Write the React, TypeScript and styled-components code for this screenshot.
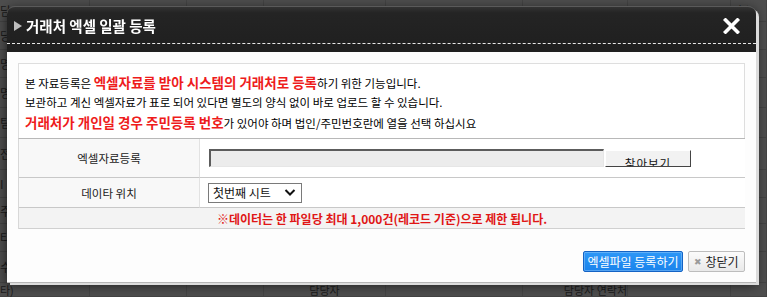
import React from "react";
import styled, { createGlobalStyle } from "styled-components";

const GlobalStyle = createGlobalStyle`
  html, body { margin: 0; padding: 0; }
  body {
    background: #4e4e4e;
    font-family: "Noto Sans CJK KR", "Noto Sans", sans-serif;
    overflow: hidden;
  }
`;

/* ---------- dimmed page behind the dialog ---------- */
const BgPage = styled.div`
  width: 767px;
  height: 297px;
  display: flex;
  flex-direction: column;
  overflow: hidden;
  color: #1c1c1c;
  font-size: 12px;
`;

const BgRow = styled.div<{ $h: number }>`
  height: ${(p) => p.$h}px;
  flex: none;
  display: grid;
  grid-template-columns: 90px 97px 77px 122px 137px 105px 103px 36px;
  border-bottom: 1px solid #434343;
  box-sizing: border-box;
`;

const BgCell = styled.div<{ $align?: string; $top?: boolean }>`
  border-right: 1px solid #444;
  display: flex;
  align-items: ${(p) => (p.$top ? "flex-start" : "center")};
  padding-top: ${(p) => (p.$top ? "1px" : "0")};
  font-size: ${(p) => (p.$top ? "11px" : "12px")};
  line-height: 12px;
  justify-content: ${(p) => p.$align || "flex-start"};
  white-space: nowrap;
  overflow: ${(p) => (p.$top ? "visible" : "hidden")};
`;

/* ---------- dialog ---------- */
const Overlay = styled.div`
  position: fixed;
  inset: 0;
`;

const Dialog = styled.div`
  position: absolute;
  left: 7px;
  top: 6px;
  width: 749px;
  display: flex;
  flex-direction: column;
  box-shadow: 0 1px 0 #b5b5b5, 3px 3px 0 #dcdcdc, 0 3px 12px rgba(0, 0, 0, 0.65);
  border-radius: 8px 8px 0 0;
`;

const Header = styled.div`
  background: linear-gradient(#333333 0px, #242424 6px, #1f1f1f 100%);
  border-radius: 8px 8px 0 0;
  padding-bottom: 8px;
  border-top: 1px solid #5a5a5a;
`;

const TitleRow = styled.div`
  height: 36px;
  display: flex;
  align-items: center;
  justify-content: space-between;
  padding: 0 16px 0 7px;
  border-bottom: 1px dashed #e8e8e8;
`;

const Title = styled.h1`
  margin: 0;
  display: flex;
  align-items: center;
  gap: 4px;
  color: #ffffff;
  font-size: 14.5px;
  font-weight: bold;
  letter-spacing: 0;
`;

const Arrow = styled.span`
  width: 0;
  height: 0;
  border-left: 8px solid #bdbdbd;
  border-top: 5px solid transparent;
  border-bottom: 5px solid transparent;
  margin-top: 1px;
`;

const CloseX = styled.button`
  border: 0;
  background: none;
  padding: 0;
  width: 17px;
  height: 16px;
  display: flex;
  margin-top: 1px;
  cursor: pointer;
`;

const Body = styled.div`
  background: #fdfdfd;
  padding: 11px 11px 10px;
  display: flex;
  flex-direction: column;
`;

const InfoBox = styled.div`
  border: 1px solid #dedede;
  border-bottom: 0;
  background: #ffffff;
  padding: 8px 6px 6px;
  font-size: 11.5px;
  color: #000;
  line-height: 20px;
`;

const InfoLine = styled.p`
  margin: 0;
  height: 20px;
  display: flex;
  align-items: baseline;
  white-space: pre;
`;

const Red = styled.span`
  color: #ee1c1c;
  font-size: 13.5px;
  font-weight: bold;
`;

const Table = styled.div`
  display: grid;
  grid-template-columns: 181px 1fr;
  border-top: 1px solid #b8b8b8;
  border-left: 1px solid #d8d8d8;
  font-size: 11.5px;
  color: #222;
`;

const Label = styled.div<{ $h: number }>`
  height: ${(p) => p.$h}px;
  box-sizing: border-box;
  display: flex;
  align-items: center;
  justify-content: center;
  background: #f8f8f8;
  border-right: 1px solid #e2e2e2;
  border-bottom: 1px solid #c8c8c8;
`;

const Value = styled.div<{ $h: number }>`
  height: ${(p) => p.$h}px;
  box-sizing: border-box;
  display: flex;
  align-items: center;
  padding-left: 9px;
  background: #ffffff;
  border-bottom: 1px solid #c8c8c8;
`;

const Notice = styled.div`
  grid-column: 1 / span 2;
  height: 21px;
  box-sizing: border-box;
  display: flex;
  align-items: center;
  justify-content: center;
  background: #f3f3f3;
  color: #e01616;
  font-weight: bold;
  font-size: 12px;
  border-bottom: 1px solid #d0d0d0;
`;

const FileRow = styled.div`
  display: flex;
  align-items: center;
  gap: 1px;
`;

const FileBox = styled.div`
  width: 395px;
  height: 18px;
  box-sizing: border-box;
  background: #ececec;
  border-top: 2px solid #5c5c5c;
  border-left: 2px solid #5c5c5c;
  border-right: 1px solid #e6e6e6;
  border-bottom: 1px solid #e6e6e6;
`;

const BrowseButton = styled.button`
  width: 86px;
  height: 17px;
  box-sizing: border-box;
  margin-top: 1px;
  padding: 5px 0 0;
  overflow: hidden;
  background: #f2f2f2;
  border: 0;
  border-top: 1px solid #fff;
  border-left: 1px solid #fff;
  border-right: 1px solid #444;
  border-bottom: 1px solid #444;
  font-family: inherit;
  font-size: 11.5px;
  line-height: 14px;
  color: #111;
  letter-spacing: 1px;
`;

const SelectWrap = styled.div`
  position: relative;
  width: 94px;
  height: 20px;
  margin-left: -1px;
`;

const Select = styled.select`
  appearance: none;
  width: 94px;
  height: 20px;
  box-sizing: border-box;
  border: 1px solid #7a7a7a;
  border-radius: 0;
  background: #fff;
  font-family: inherit;
  font-size: 12px;
  color: #111;
  padding: 0 0 0 4px;
`;

const Chevron = styled.svg`
  position: absolute;
  right: 6px;
  top: 5px;
  pointer-events: none;
`;

const Footer = styled.div`
  display: flex;
  justify-content: flex-end;
  gap: 5px;
  margin-top: 22px;
`;

const PrimaryButton = styled.button`
  height: 21px;
  width: 100px;
  box-sizing: border-box;
  border: 1px solid #1463c4;
  border-radius: 2px;
  background: linear-gradient(#2d97f7, #1a83ec);
  box-shadow: inset 0 0 0 1px rgba(255, 255, 255, 0.25);
  color: #fff;
  font-family: inherit;
  font-size: 12px;
  padding: 0;
`;

const GrayButton = styled.button`
  height: 21px;
  width: 57px;
  box-sizing: border-box;
  border: 1px solid #bdbdbd;
  border-radius: 2px;
  background: linear-gradient(#fbfbfb, #e9e9e9);
  color: #222;
  font-family: inherit;
  font-size: 12px;
  padding: 0;
  display: flex;
  align-items: center;
  justify-content: center;
  gap: 3px;
`;

const SmallX = styled.span`
  color: #9a9a9a;
  font-size: 9px;
`;

type BgCellData = [string, string];
const e: BgCellData = ["", ""];
const leftRow = (t: string): BgCellData[] => [[t, ""], e, e, e, e, e, e, e];

const bgRows: { h: number; top?: boolean; cells: BgCellData[] }[] = [
  { h: 22, cells: [["담", ""], e, e, e, e, e, e, ["번호", ""]] },
  { h: 28, cells: [["당", ""], e, e, e, e, e, e, ["번호", ""]] },
  { h: 28, cells: leftRow("명") },
  { h: 30, cells: leftRow("명") },
  { h: 30, cells: leftRow("팀") },
  { h: 32, cells: leftRow("전") },
  { h: 28, cells: leftRow("I") },
  { h: 26, cells: leftRow("주") },
  { h: 28, cells: leftRow("타)") },
  { h: 31, cells: leftRow("수") },
  { h: 14, top: true, cells: [["타)", ""], e, e, ["담당자", "center"], e, ["담당자 연락처", "flex-end"], e, e] },
];

export default function App() {
  return (
    <>
      <GlobalStyle />
      <BgPage>
        {bgRows.map((r, i) => (
          <BgRow key={i} $h={r.h}>
            {r.cells.map(([t, a], j) => (
              <BgCell key={j} $align={a || undefined} $top={r.top}>
                {t}
              </BgCell>
            ))}
          </BgRow>
        ))}
      </BgPage>
      <Overlay>
        <Dialog>
          <Header>
            <TitleRow>
              <Title>
                <Arrow />
                거래처 엑셀 일괄 등록
              </Title>
              <CloseX aria-label="닫기">
                <svg width="17" height="16" viewBox="0 0 17 16">
                  <path d="M2.5 2 L14.5 14 M14.5 2 L2.5 14" stroke="#fff" strokeWidth="3.6" strokeLinecap="square" />
                </svg>
              </CloseX>
            </TitleRow>
          </Header>
          <Body>
            <InfoBox>
              <InfoLine>
                본 자료등록은 <Red>엑셀자료를 받아 시스템의 거래처로 등록</Red>하기 위한 기능입니다.
              </InfoLine>
              <InfoLine>보관하고 계신 엑셀자료가 표로 되어 있다면 별도의 양식 없이 바로 업로드 할 수 있습니다.</InfoLine>
              <InfoLine>
                <Red>거래처가 개인일 경우 주민등록 번호</Red>가 있어야 하며 법인/주민번호란에 열을 선택 하십시요
              </InfoLine>
            </InfoBox>
            <Table>
              <Label $h={39}>엑셀자료등록</Label>
              <Value $h={39}>
                <FileRow>
                  <FileBox />
                  <BrowseButton>찾아보기</BrowseButton>
                </FileRow>
              </Value>
              <Label $h={30}>데이타 위치</Label>
              <Value $h={30}>
                <SelectWrap>
                  <Select defaultValue="1">
                    <option value="1">첫번째 시트</option>
                  </Select>
                  <Chevron width="12" height="9" viewBox="0 0 12 9">
                    <path d="M1.5 2 L6 6.5 L10.5 2" fill="none" stroke="#111" strokeWidth="2" />
                  </Chevron>
                </SelectWrap>
              </Value>
              <Notice>※데이터는 한 파일당 최대 1,000건(레코드 기준)으로 제한 됩니다.</Notice>
            </Table>
            <Footer>
              <PrimaryButton>엑셀파일 등록하기</PrimaryButton>
              <GrayButton>
                <SmallX>✖</SmallX>창닫기
              </GrayButton>
            </Footer>
          </Body>
        </Dialog>
      </Overlay>
    </>
  );
}
